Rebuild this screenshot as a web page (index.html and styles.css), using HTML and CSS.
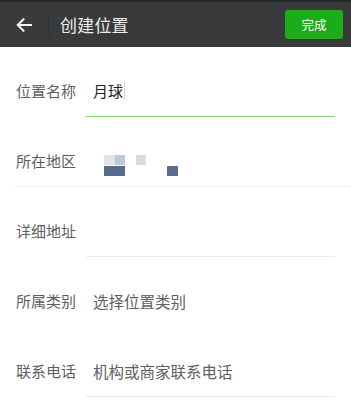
FILE: index.html
```html
<!DOCTYPE html>
<html lang="zh">
<head>
<meta charset="utf-8">
<link rel="stylesheet" href="styles.css">
</head>
<body>
<header class="bar">
  <div class="back">
    <svg width="16" height="14" viewBox="0 0 16 14"><path d="M15 7H2M7.5 1.2L1.7 7l5.8 5.8" fill="none" stroke="#f2f2f2" stroke-width="2" stroke-linecap="square"/></svg>
  </div>
  <div class="divider"></div>
  <div class="title">创建位置</div>
  <button class="done">完成</button>
</header>
<main class="form">
  <div class="row">
    <div class="label">位置名称</div>
    <div class="field field-active"><span class="value">月球</span><span class="caret"></span></div>
  </div>
  <div class="row row-full">
    <div class="label">所在地区</div>
    <div class="field field-plain">
      <div class="mosaic">
        <span class="m m1"></span><span class="m m2"></span><span class="m"></span><span class="m m3"></span><span class="m"></span><span class="m"></span><span class="m"></span>
        <span class="m m4 m-wide"></span><span class="m"></span><span class="m"></span><span class="m"></span><span class="m"></span><span class="m m5"></span>
      </div>
    </div>
  </div>
  <div class="row">
    <div class="label">详细地址</div>
    <div class="field"></div>
  </div>
  <div class="row">
    <div class="label">所属类别</div>
    <div class="field field-none"><span class="hint">选择位置类别</span></div>
  </div>
  <div class="row">
    <div class="label">联系电话</div>
    <div class="field"><span class="hint">机构或商家联系电话</span></div>
  </div>
</main>
</body>
</html>
```
FILE: styles.css
```css
* { box-sizing: border-box; }
html, body { margin: 0; padding: 0; background: #fff; }
body {
  font-family: "Noto Sans CJK SC", "Noto Sans", sans-serif;
  width: 351px;
  height: 400px;
  overflow: hidden;
}
.bar {
  height: 47px;
  background: #393a3b;
  border-top: 2px solid #262727;
  display: flex;
  align-items: center;
  padding: 0 8px 0 16px;
}
.back { width: 16px; height: 14px; display: flex; margin-top: 1px; }
.divider {
  width: 1px;
  height: 23px;
  background: #303132;
  margin-left: 16px;
}
.title {
  margin-left: 11px;
  font-size: 17px;
  color: #ececec;
  line-height: 20px;
  flex: 1;
  letter-spacing: 0.2px;
}
.done {
  width: 58px;
  height: 29px;
  background: #1aad19;
  border: none;
  border-radius: 3px;
  color: #fff;
  font-family: inherit;
  font-size: 12.5px;
  padding: 0;
  margin-top: -1px;
}
.form { padding: 0; }
.row {
  display: flex;
  height: 70px;
  padding: 0 16px;
}
.label {
  width: 70px;
  padding-top: 34px;
  font-size: 15px;
  line-height: 20px;
  color: #5e5e5e;
}
.field {
  flex: 1;
  display: flex;
  align-items: flex-start;
  padding: 34px 0 0 7px;
  border-bottom: 1px solid #ececec;
  font-size: 15px;
  line-height: 20px;
}
.field-active { border-bottom: 1px solid #7fd06e; }
.field-none { border-bottom-color: transparent; }
.field-plain { border-bottom: none; }
.row-full { border-bottom: 1px solid #f0f0f0; margin-left: 15px; padding-left: 1px; }
.value { color: #222; }
.caret {
  width: 1px;
  height: 19px;
  background: #d8d8d8;
  margin-left: 1px;
}
.hint { color: #5e5e5e; font-size: 15.5px; }
.mosaic {
  display: grid;
  grid-template-columns: repeat(7, 10.5px);
  grid-template-rows: 10px 10px;
  row-gap: 1px;
  margin: 4px 0 0 11px;
}
.m { display: block; }
.m1 { background: #dfe4ea; }
.m2 { background: #bfc8d5; }
.m3 { background: #d8dde3; }
.m4 { background: #56698f; }
.m-wide { grid-column: span 2; }
.m5 { background: #5a6c92; }
```
